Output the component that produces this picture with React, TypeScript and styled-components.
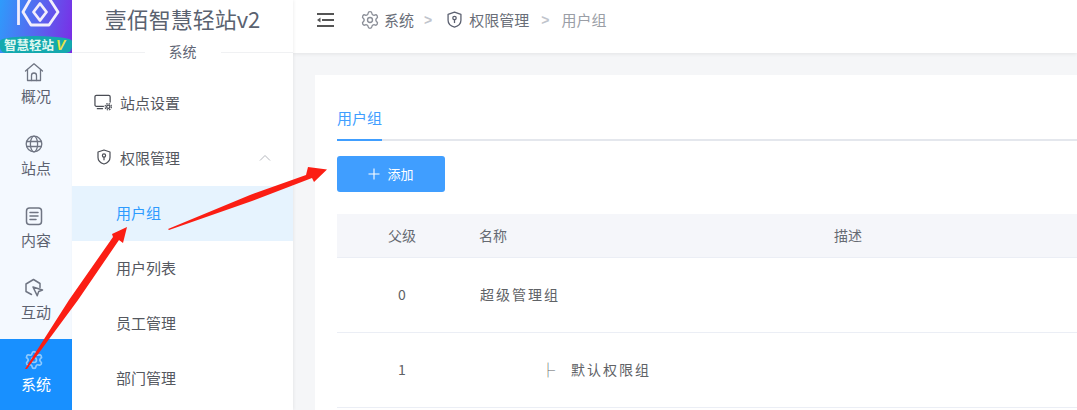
import React from "react";
import styled, { createGlobalStyle } from "styled-components";
import { Settings } from "lucide-react";

const CJK = `"Noto Sans CJK SC", "Liberation Sans", sans-serif`;

const Global = createGlobalStyle`
  html, body { margin: 0; padding: 0; width: 100%; height: 100%; overflow: hidden; }
  body { font-family: ${CJK}; background: #fff; }
  #root { height: 100%; }
`;

const Page = styled.div`
  position: relative;
  display: flex;
  width: 1077px;
  height: 410px;
  overflow: hidden;
`;

const Rail = styled.nav`
  flex: 0 0 72px;
  display: flex;
  flex-direction: column;
  background: #f4f9ff;
`;

const Logo = styled.div`
  position: relative;
  height: 53px;
  margin-bottom: -2px;
  flex: none;
  display: flex;
  flex-direction: column;
  justify-content: flex-end;
  align-items: center;
  background: linear-gradient(100deg, #2f9bfb 0%, #5a62ee 55%, #7c2be6 100%);
  overflow: hidden;
  z-index: 1;
`;

const LogoMark = styled.svg`
  position: absolute;
  left: 0;
  top: 0;
`;

const LogoBand = styled.div`
  width: 100%;
  height: 17px;
  border-radius: 50% 50% 6px 6px / 5px 5px 6px 6px;
  background: #14a9ae;
  color: #dff8f0;
  font-size: 12.5px;
  font-weight: 700;
  line-height: 17px;
  padding-left: 4px;
  box-sizing: border-box;
  white-space: nowrap;
  z-index: 1;
`;

const LogoV = styled.span`
  margin-left: 2px;
  color: #e8e24a;
  font-style: italic;
  font-size: 14px;
  font-family: "Liberation Sans", sans-serif;
`;

const RailItem = styled.div<{ $active?: boolean }>`
  height: 72px;
  flex: none;
  display: flex;
  flex-direction: column;
  align-items: center;
  gap: 3px;
  padding-top: 11px;
  box-sizing: border-box;
  background: ${(p) => (p.$active ? "#1890ff" : "transparent")};
  color: ${(p) => (p.$active ? "#ffffff" : "#5c6270")};
  font-size: 15px;
  line-height: 22px;
`;

const RailIcon = styled.span<{ $active?: boolean }>`
  display: flex;
  margin-right: 4px;
  color: ${(p) => (p.$active ? "#8ecaff" : "#6f7583")};
`;

const Side = styled.aside`
  flex: 0 0 221px;
  display: flex;
  flex-direction: column;
  background: #fff;
  box-shadow: 1px 0 3px rgba(0, 0, 0, 0.06);
  z-index: 2;
`;

const SideTitle = styled.div`
  height: 53px;
  flex: none;
  box-sizing: border-box;
  padding-bottom: 16px;
  display: flex;
  align-items: center;
  justify-content: center;
  font-size: 22px;
  color: #5a6270;
  border-bottom: 1px solid #f0f1f3;
`;

const SideSub = styled.div`
  align-self: center;
  margin-top: -12px;
  padding: 0 24px;
  height: 20px;
  background: #fff;
  font-size: 14px;
  line-height: 20px;
  color: #5f6675;
`;

const MenuList = styled.div`
  display: flex;
  flex-direction: column;
  margin-top: 15px;
`;

const MenuItem = styled.div<{ $active?: boolean; $sub?: boolean }>`
  height: 55px;
  flex: none;
  display: flex;
  align-items: center;
  gap: 7px;
  box-sizing: border-box;
  padding: 0 22px 2px ${(p) => (p.$sub ? "44px" : "22px")};
  font-size: 15px;
  color: ${(p) => (p.$active ? "#2d9bff" : "#55585f")};
  background: ${(p) => (p.$active ? "#e6f3fe" : "transparent")};
`;

const MenuIconSlot = styled.span`
  width: 19px;
  display: flex;
  justify-content: center;
`;

const Chevron = styled.svg`
  margin-left: auto;
`;

const Main = styled.main`
  flex: 1;
  min-width: 0;
  display: flex;
  flex-direction: column;
  background: #f5f6f8;
`;

const Header = styled.header`
  height: 53px;
  flex: none;
  display: flex;
  align-items: center;
  padding: 0 0 14px 24px;
  box-sizing: border-box;
  background: #fff;
  box-shadow: 0 1px 4px rgba(0, 0, 0, 0.08);
  font-size: 15px;
`;

const Crumbs = styled.div`
  display: flex;
  align-items: center;
  margin-left: 26px;
`;

const Crumb = styled.span<{ $last?: boolean; $shield?: boolean }>`
  display: flex;
  align-items: center;
  gap: ${(p) => (p.$shield ? "7px" : "4px")};
  padding: 0 ${(p) => (p.$shield ? "2px" : "0")} 0 ${(p) => (p.$shield ? "3px" : "0")};
  color: ${(p) => (p.$last ? "#9a9ea6" : "#696e78")};
`;

const Sep = styled.span`
  color: #c0c4cc;
  font-family: "Liberation Sans", sans-serif;
  font-weight: 700;
  font-size: 14px;
  margin: 0 12px 0 10px;
`;

const Card = styled.section`
  margin: 22px 0 0 22px;
  flex: 1;
  background: #fff;
  padding: 20px 0 0 22px;
  display: flex;
  flex-direction: column;
`;

const Tabs = styled.div`
  height: 46px;
  flex: none;
  box-sizing: border-box;
  display: flex;
  border-bottom: 2px solid #e4e7ed;
`;

const Tab = styled.div`
  height: 46px;
  box-sizing: border-box;
  line-height: 46px;
  font-size: 15px;
  color: #409eff;
  border-bottom: 2px solid #409eff;
`;

const AddButton = styled.button`
  margin-top: 15px;
  width: 108px;
  height: 36px;
  flex: none;
  display: flex;
  align-items: center;
  justify-content: center;
  gap: 7px;
  border: 0;
  border-radius: 3px;
  background: #409eff;
  color: #fff;
  font-family: ${CJK};
  font-size: 13px;
  padding: 0 0 1px;
`;

const Table = styled.div`
  margin-top: 22px;
  display: flex;
  flex-direction: column;
  font-size: 14px;
`;

const Row = styled.div<{ $head?: boolean }>`
  display: grid;
  grid-template-columns: 130px 355px 1fr;
  align-items: center;
  height: ${(p) => (p.$head ? "44px" : "75px")};
  padding-bottom: 2px;
  box-sizing: border-box;
  background: ${(p) => (p.$head ? "#f5f6fa" : "#fff")};
  border-bottom: 1px solid #ebeef5;
  color: ${(p) => (p.$head ? "#666a72" : "#606266")};
`;

const CellCenter = styled.div`
  text-align: center;
`;

const Cell = styled.div`
  padding-left: 12px;
`;

const NameCell = styled(Cell)<{ $indent?: boolean }>`
  padding-left: ${(p) => (p.$indent ? "74px" : "13px")};
  letter-spacing: 2px;
  display: flex;
  gap: 14px;
`;

const Arrows = styled.svg`
  position: absolute;
  left: 0;
  top: 0;
  pointer-events: none;
  z-index: 5;
`;

const S = { fill: "none", stroke: "currentColor", strokeWidth: 1.3, strokeLinecap: "round", strokeLinejoin: "round" } as const;

const HomeIcon = () => (
  <svg width="20" height="20" viewBox="0 0 20 20" {...S}>
    <path d="M1.500 9 10 1.800 18.500 9" />
    <path d="M3.500 7.500V18.500h13V7.500" />
    <path d="M7.500 18.500v-5a2.500 2.500 0 0 1 5 0v5" />
  </svg>
);
const GlobeIcon = () => (
  <svg width="20" height="20" viewBox="0 0 20 20" {...S}>
    <circle cx="10" cy="10" r="7.800" />
    <ellipse cx="10" cy="10" rx="3.600" ry="7.800" />
    <path d="M2.600 7.500h14.800M2.600 12.500h14.800" />
  </svg>
);
const DocIcon = () => (
  <svg width="20" height="20" viewBox="0 0 20 20" {...S} strokeWidth={1.5}>
    <rect x="2.500" y="2" width="15" height="16.500" rx="3" />
    <path d="M6 6.500h8M6 10h8M6 13.500h6" />
  </svg>
);
const InteractIcon = () => (
  <svg width="20" height="20" viewBox="0 0 20 20" {...S} strokeWidth={1.5}>
    <path d="M7.500 16.500 2 13.500V6L9.500 1.500 16 5.500v4" />
    <path d="m9 9 9.500 3-3.800 1.500-1.500 4.200z" />
  </svg>
);
const MonitorIcon = () => (
  <svg width="20" height="17" viewBox="0 0 20 17" fill="none" stroke="#4a4d55" strokeWidth="1.300" strokeLinecap="round">
    <path d="M10 12.500H2.500A1.500 1.500 0 0 1 1 11V2.500A1.500 1.500 0 0 1 2.500 1h13A1.500 1.500 0 0 1 17 2.500V8" />
    <path d="M3.500 15H9" />
    <circle cx="15" cy="13" r="1.700" />
    <circle cx="15" cy="13" r="3.300" strokeWidth="1.300" strokeDasharray="1.500 1.100" strokeLinecap="butt" />
  </svg>
);
const ShieldIcon = ({ size = 14, color = "#4a4d55" }: { size?: number; color?: string }) => (
  <svg width={size} height={size * 1.15} viewBox="0 0 14 16" fill="none" stroke={color} strokeWidth="1.200" strokeLinejoin="round">
    <path d="M7 1 13 3v5.500c0 3-2.600 5.500-6 6.500-3.400-1-6-3.500-6-6.500V3z" />
    <circle cx="7" cy="6.500" r="1.600" />
    <path d="M7 8v3.200" />
  </svg>
);

const railItems = [
  { label: "概况", icon: <HomeIcon /> },
  { label: "站点", icon: <GlobeIcon /> },
  { label: "内容", icon: <DocIcon /> },
  { label: "互动", icon: <InteractIcon /> },
];

export default function App() {
  return (
    <Page>
      <Global />
      <Rail>
        <Logo>
          <LogoMark width="72" height="36" viewBox="0 0 72 36" fill="none" stroke="#f2eefc" strokeWidth="2.800" strokeLinejoin="round">
            <path d="M18.500 0v25" />
            <path d="M31 -2 23 12 31 25h9" />
            <path d="M49 -2 58 12 49 25h-9" />
            <path d="M40 3.500 46.500 12 40 20.500 33.500 12z" />
          </LogoMark>
          <LogoBand>
            智慧轻站<LogoV>V</LogoV>
          </LogoBand>
        </Logo>
        {railItems.map((r) => (
          <RailItem key={r.label}>
            <RailIcon>{r.icon}</RailIcon>
            {r.label}
          </RailItem>
        ))}
        <RailItem $active>
          <RailIcon $active>
            <Settings size={20} strokeWidth={2} />
          </RailIcon>
          系统
        </RailItem>
      </Rail>
      <Side>
        <SideTitle>壹佰智慧轻站v2</SideTitle>
        <SideSub>系统</SideSub>
        <MenuList>
          <MenuItem>
            <MenuIconSlot>
              <MonitorIcon />
            </MenuIconSlot>
            站点设置
          </MenuItem>
          <MenuItem>
            <MenuIconSlot>
              <ShieldIcon />
            </MenuIconSlot>
            权限管理
            <Chevron width="12" height="8" viewBox="0 0 12 8" fill="none" stroke="#b4b7bd" strokeWidth="1">
              <path d="M1 6.500 6 1.500l5 5" />
            </Chevron>
          </MenuItem>
          <MenuItem $sub $active>用户组</MenuItem>
          <MenuItem $sub>用户列表</MenuItem>
          <MenuItem $sub>员工管理</MenuItem>
          <MenuItem $sub>部门管理</MenuItem>
        </MenuList>
      </Side>
      <Main>
        <Header>
          <svg width="17" height="14" viewBox="0 0 17 14" fill="#555">
            <rect x="0" y="0" width="17" height="2" />
            <rect x="5" y="6" width="12" height="2" />
            <rect x="0" y="12" width="17" height="2" />
            <path d="M0 7l3.500-2.500v5z" />
          </svg>
          <Crumbs>
            <Crumb>
              <Settings size={20} strokeWidth={1.6} color="#8b8f98" />
              系统
            </Crumb>
            <Sep>&gt;</Sep>
            <Crumb $shield>
              <ShieldIcon size={15} color="#5b6070" />
              权限管理
            </Crumb>
            <Sep>&gt;</Sep>
            <Crumb $last>用户组</Crumb>
          </Crumbs>
        </Header>
        <Card>
          <Tabs>
            <Tab>用户组</Tab>
          </Tabs>
          <AddButton>
            <svg width="12" height="12" viewBox="0 0 12 12" stroke="#fff" strokeWidth="1.100">
              <path d="M6 .5v11M.5 6h11" />
            </svg>
            添加
          </AddButton>
          <Table>
            <Row $head>
              <CellCenter>父级</CellCenter>
              <Cell>名称</Cell>
              <Cell>描述</Cell>
            </Row>
            <Row>
              <CellCenter>0</CellCenter>
              <NameCell>超级管理组</NameCell>
              <Cell />
            </Row>
            <Row>
              <CellCenter>1</CellCenter>
              <NameCell $indent>
                <span>├</span>
                <span>默认权限组</span>
              </NameCell>
              <Cell />
            </Row>
          </Table>
        </Card>
      </Main>
      <Arrows width="1077" height="410" viewBox="0 0 1077 410">
        <polygon fill="#fb1e14" points="25,369 69,300 113,237 112,234 127,227 123,243 119,240 78,300 27,369" />
        <polygon fill="#fb1e14" points="168,229 250,195 306,175 308,167 327,169.500 314,182 312,178 252,201 169,230" />
      </Arrows>
    </Page>
  );
}
